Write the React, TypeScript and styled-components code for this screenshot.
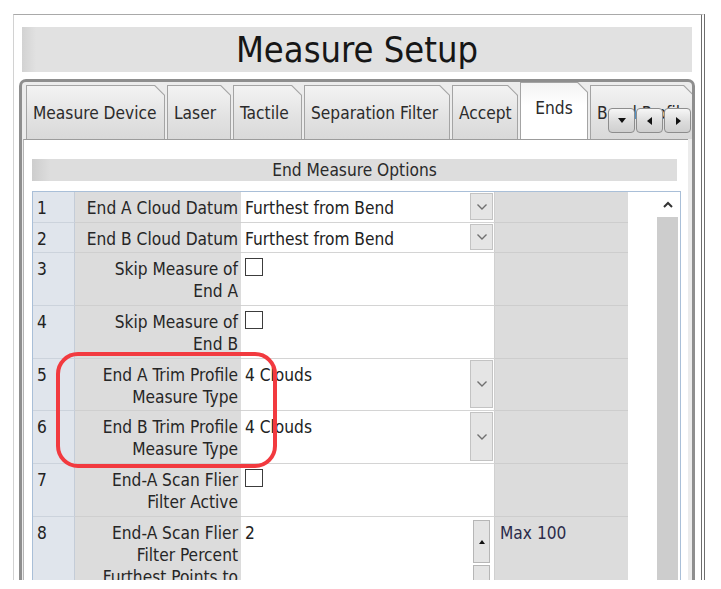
import React from "react";
import styled, { createGlobalStyle } from "styled-components";

const GlobalStyle = createGlobalStyle`
  html, body { margin: 0; padding: 0; background: #ffffff; }
  body {
    font-family: "DejaVu Sans Condensed", "DejaVu Sans", sans-serif;
    color: #222222;
  }
  * { box-sizing: border-box; }
`;

const Window = styled.div`
  position: relative;
  margin: 14px 0 0 13px;
  width: 692px;
  height: 566px;
  border-top: 1px solid #a9a9a9;
  border-left: 1px solid #d2d2d2;
  border-right: 4px double #6e6e6e;
  padding-top: 12px;
  display: flex;
  flex-direction: column;
  overflow: hidden;
  background: #ffffff;
`;

const TitleBar = styled.div`
  flex: none;
  margin: 0 9px 0 8px;
  height: 45px;
  background: linear-gradient(to right, #d2d2d2 0, #e1e1e1 14px, #e1e1e1 100%);
  display: flex;
  align-items: center;
  justify-content: center;
  font-size: 36px;
  color: #161616;
  line-height: 1;
`;

const TabFrame = styled.div`
  position: relative;
  margin: 7px 6px 0 5px;
  flex: 1;
  min-height: 0;
  border: 3px solid #8e8e8e;
  border-bottom: none;
  border-radius: 7px 7px 0 0;
  background: #ececec;
  display: flex;
  flex-direction: column;
`;

const TabStrip = styled.div`
  position: relative;
  z-index: 1;
  flex: none;
  display: flex;
  align-items: flex-end;
  gap: 2px;
  height: 57px;
  padding-left: 4px;
  overflow: hidden;
`;

const TabShape = styled.div<{ $w: number; $active?: boolean }>`
  flex: none;
  width: ${(p) => p.$w}px;
  height: ${(p) => (p.$active ? 58 : 54)}px;
  margin-bottom: ${(p) => (p.$active ? -1 : 0)}px;
  padding: 1px 1px 0 1px;
  background: #a4a4a4;
  clip-path: polygon(0 0, calc(100% - 10px) 0, 100% 10px, 100% 100%, 0 100%);
  display: flex;
`;

const TabFace = styled.div<{ $active?: boolean }>`
  flex: 1;
  display: flex;
  align-items: center;
  justify-content: ${(p) => (p.$active ? "center" : "flex-start")};
  padding: ${(p) => (p.$active ? "0 0 8px 0" : "0 0 0 6px")};
  font-size: 17.2px;
  white-space: nowrap;
  overflow: hidden;
  color: #2b2b2b;
  background: ${(p) =>
    p.$active
      ? "linear-gradient(#f4f4f4, #ffffff 40%, #ffffff)"
      : "linear-gradient(#f3f3f3, #e2e2e2 60%, #d9d9d9)"};
  clip-path: polygon(0 0, calc(100% - 9.6px) 0, 100% 9.6px, 100% 100%, 0 100%);
`;

const ScrollButtons = styled.div`
  position: absolute;
  z-index: 2;
  left: 586px;
  top: 26px;
  display: flex;
  gap: 1px;
`;

const ScrollButton = styled.div`
  width: 27px;
  height: 25px;
  border: 1px solid #8d8d8d;
  border-radius: 4px;
  background: linear-gradient(#f6f6f6, #dcdcdc 55%, #cfcfcf);
  display: flex;
  align-items: center;
  justify-content: center;
`;

const Content = styled.div`
  flex: 1;
  min-height: 0;
  margin: 0 4px 0 1px;
  background: #ffffff;
  border-top: 1px solid #9c9c9c;
  border-left: 1px solid #b5b5b5;
  padding: 19px 0 0 8px;
  display: flex;
  flex-direction: column;
`;

const SectionHeader = styled.div`
  flex: none;
  width: 645px;
  height: 22px;
  background: linear-gradient(to right, #cdcdcd 0, #dddddd 18px, #dddddd 100%);
  text-align: center;
  font-size: 17.2px;
  line-height: 22px;
  color: #2a2a2a;
`;

const Table = styled.div`
  margin-top: 10px;
  width: 649px;
  flex: 1;
  min-height: 0;
  border: 1px solid #a9bfd8;
  border-bottom: none;
  display: flex;
`;

const Rows = styled.div`
  width: 595px;
  display: flex;
  flex-direction: column;
`;

const Row = styled.div<{ $h?: number }>`
  display: grid;
  grid-template-columns: 42px 166px 254px 133px;
  height: ${(p) => (p.$h ? `${p.$h}px` : "auto")};
  flex: ${(p) => (p.$h ? "none" : "1 0 auto")};
`;

const NumCell = styled.div`
  background: #e0e5ec;
  border-right: 1px solid #c4ccd7;
  border-bottom: 1px solid #ccd3dc;
  padding: 5px 0 0 4px;
  font-size: 17.2px;
  line-height: 22px;
`;

const LabelCell = styled.div`
  background: #dcdcdc;
  border-bottom: 1px solid #cfcfcf;
  text-align: right;
  padding: 5px 3px 0 4px;
  font-size: 17.2px;
  line-height: 22px;
  color: #262626;
`;

const ValueCell = styled.div`
  background: #ffffff;
  border-bottom: 1px solid #d4d4d4;
  border-right: 1px solid #d0d0d0;
  display: flex;
  align-items: stretch;
  padding: 1px 1px 2px 4px;
`;

const ValueText = styled.div`
  flex: 1;
  padding-top: 4px;
  font-size: 17.2px;
  line-height: 22px;
  white-space: nowrap;
`;

const ExtraCell = styled.div`
  background: #dcdcdc;
  border-bottom: 1px solid #cdcdcd;
  padding: 5px 0 0 5px;
  font-size: 17.2px;
  line-height: 22px;
  color: #2b2b4a;
`;

const DropButton = styled.div`
  width: 23px;
  background: #e5e5e5;
  border: 1px solid #c3c3c3;
  display: flex;
  align-items: center;
  justify-content: center;
`;

const CheckBox = styled.div`
  width: 18px;
  height: 18px;
  margin-top: 4px;
  border: 1px solid #3c3c3c;
  background: #ffffff;
`;

const Spinner = styled.div`
  width: 17px;
  margin: 2px 3px 0 0;
  display: flex;
  flex-direction: column;
  gap: 2px;
`;

const SpinButton = styled.div<{ $h: number }>`
  height: ${(p) => p.$h}px;
  background: #e4e4e4;
  border: 1px solid #b6b6b6;
  display: flex;
  align-items: center;
  justify-content: center;
`;

const Gutter = styled.div`
  width: 29px;
  background: #ffffff;
`;

const ScrollBar = styled.div`
  width: 21px;
  display: flex;
  flex-direction: column;
`;

const ScrollUp = styled.div`
  height: 25px;
  background: #ffffff;
  display: flex;
  align-items: center;
  justify-content: center;
`;

const ScrollTrack = styled.div`
  flex: 1;
  background: #cdcdcd;
`;

const TableEdge = styled.div`
  width: 2px;
  background: #ffffff;
`;

const Highlight = styled.div`
  position: absolute;
  z-index: 5;
  left: 42px;
  top: 337px;
  width: 221px;
  height: 116px;
  border: 4px solid #f23a3f;
  border-radius: 22px;
  pointer-events: none;
`;

const Chevron = () => (
  <svg width="12" height="8" viewBox="0 0 12 8">
    <polyline points="1.5,1.5 6,6 10.5,1.5" fill="none" stroke="#707070" strokeWidth="1.4" />
  </svg>
);

const Tri = ({ dir }: { dir: "down" | "left" | "right" | "up" }) => {
  const pts = {
    down: "1,2 9,2 5,7",
    up: "1,7 9,7 5,2",
    left: "7,1 7,9 2,5",
    right: "3,1 3,9 8,5",
  }[dir];
  return (
    <svg width="10" height="10" viewBox="0 0 10 10">
      <polygon points={pts} fill="#111111" />
    </svg>
  );
};

const tabs = [
  { label: "Measure Device", w: 139 },
  { label: "Laser", w: 64 },
  { label: "Tactile", w: 69 },
  { label: "Separation Filter", w: 146 },
  { label: "Accept", w: 66 },
  { label: "Ends", w: 68, active: true },
  { label: "Bend Profile", w: 104 },
];

type RowDef = {
  n: number;
  label: string[];
  h?: number;
  kind: "drop" | "check" | "spin";
  value?: string;
  extra?: string;
};

const rows: RowDef[] = [
  { n: 1, label: ["End A Cloud Datum"], h: 31, kind: "drop", value: "Furthest from Bend" },
  { n: 2, label: ["End B Cloud Datum"], h: 30, kind: "drop", value: "Furthest from Bend" },
  { n: 3, label: ["Skip Measure of", "End A"], h: 53, kind: "check" },
  { n: 4, label: ["Skip Measure of", "End B"], h: 53, kind: "check" },
  { n: 5, label: ["End A Trim Profile", "Measure Type"], h: 52, kind: "drop", value: "4 Clouds" },
  { n: 6, label: ["End B Trim Profile", "Measure Type"], h: 53, kind: "drop", value: "4 Clouds" },
  { n: 7, label: ["End-A Scan Flier", "Filter Active"], h: 53, kind: "check" },
  {
    n: 8,
    label: ["End-A Scan Flier", "Filter Percent", "Furthest Points to"],
    kind: "spin",
    value: "2",
    extra: "Max 100",
  },
];

export default function App() {
  return (
    <>
      <GlobalStyle />
      <Window>
        <TitleBar>Measure Setup</TitleBar>
        <TabFrame>
          <TabStrip>
            {tabs.map((t) => (
              <TabShape key={t.label} $w={t.w} $active={t.active}>
                <TabFace $active={t.active}>{t.label}</TabFace>
              </TabShape>
            ))}
          </TabStrip>
          <ScrollButtons>
            <ScrollButton>
              <Tri dir="down" />
            </ScrollButton>
            <ScrollButton>
              <Tri dir="left" />
            </ScrollButton>
            <ScrollButton>
              <Tri dir="right" />
            </ScrollButton>
          </ScrollButtons>
          <Content>
            <SectionHeader>End Measure Options</SectionHeader>
            <Table>
              <Rows>
                {rows.map((r) => (
                  <Row key={r.n} $h={r.h}>
                    <NumCell>{r.n}</NumCell>
                    <LabelCell>
                      {r.label.map((l, i) => (
                        <div key={i}>{l}</div>
                      ))}
                    </LabelCell>
                    <ValueCell>
                      {r.kind === "check" ? (
                        <CheckBox />
                      ) : (
                        <ValueText>{r.value}</ValueText>
                      )}
                      {r.kind === "drop" && (
                        <DropButton>
                          <Chevron />
                        </DropButton>
                      )}
                      {r.kind === "spin" && (
                        <Spinner>
                          <SpinButton $h={43}>
                            <svg width="6" height="4" viewBox="0 0 6 4">
                              <polygon points="0,4 6,4 3,0" fill="#111" />
                            </svg>
                          </SpinButton>
                          <SpinButton $h={43} />
                        </Spinner>
                      )}
                    </ValueCell>
                    <ExtraCell>{r.extra}</ExtraCell>
                  </Row>
                ))}
              </Rows>
              <Gutter />
              <ScrollBar>
                <ScrollUp>
                  <svg width="12" height="8" viewBox="0 0 12 8">
                    <polyline points="2,6 6,2 10,6" fill="none" stroke="#333" strokeWidth="2" />
                  </svg>
                </ScrollUp>
                <ScrollTrack />
              </ScrollBar>
              <TableEdge />
            </Table>
          </Content>
        </TabFrame>
        <Highlight />
      </Window>
    </>
  );
}
